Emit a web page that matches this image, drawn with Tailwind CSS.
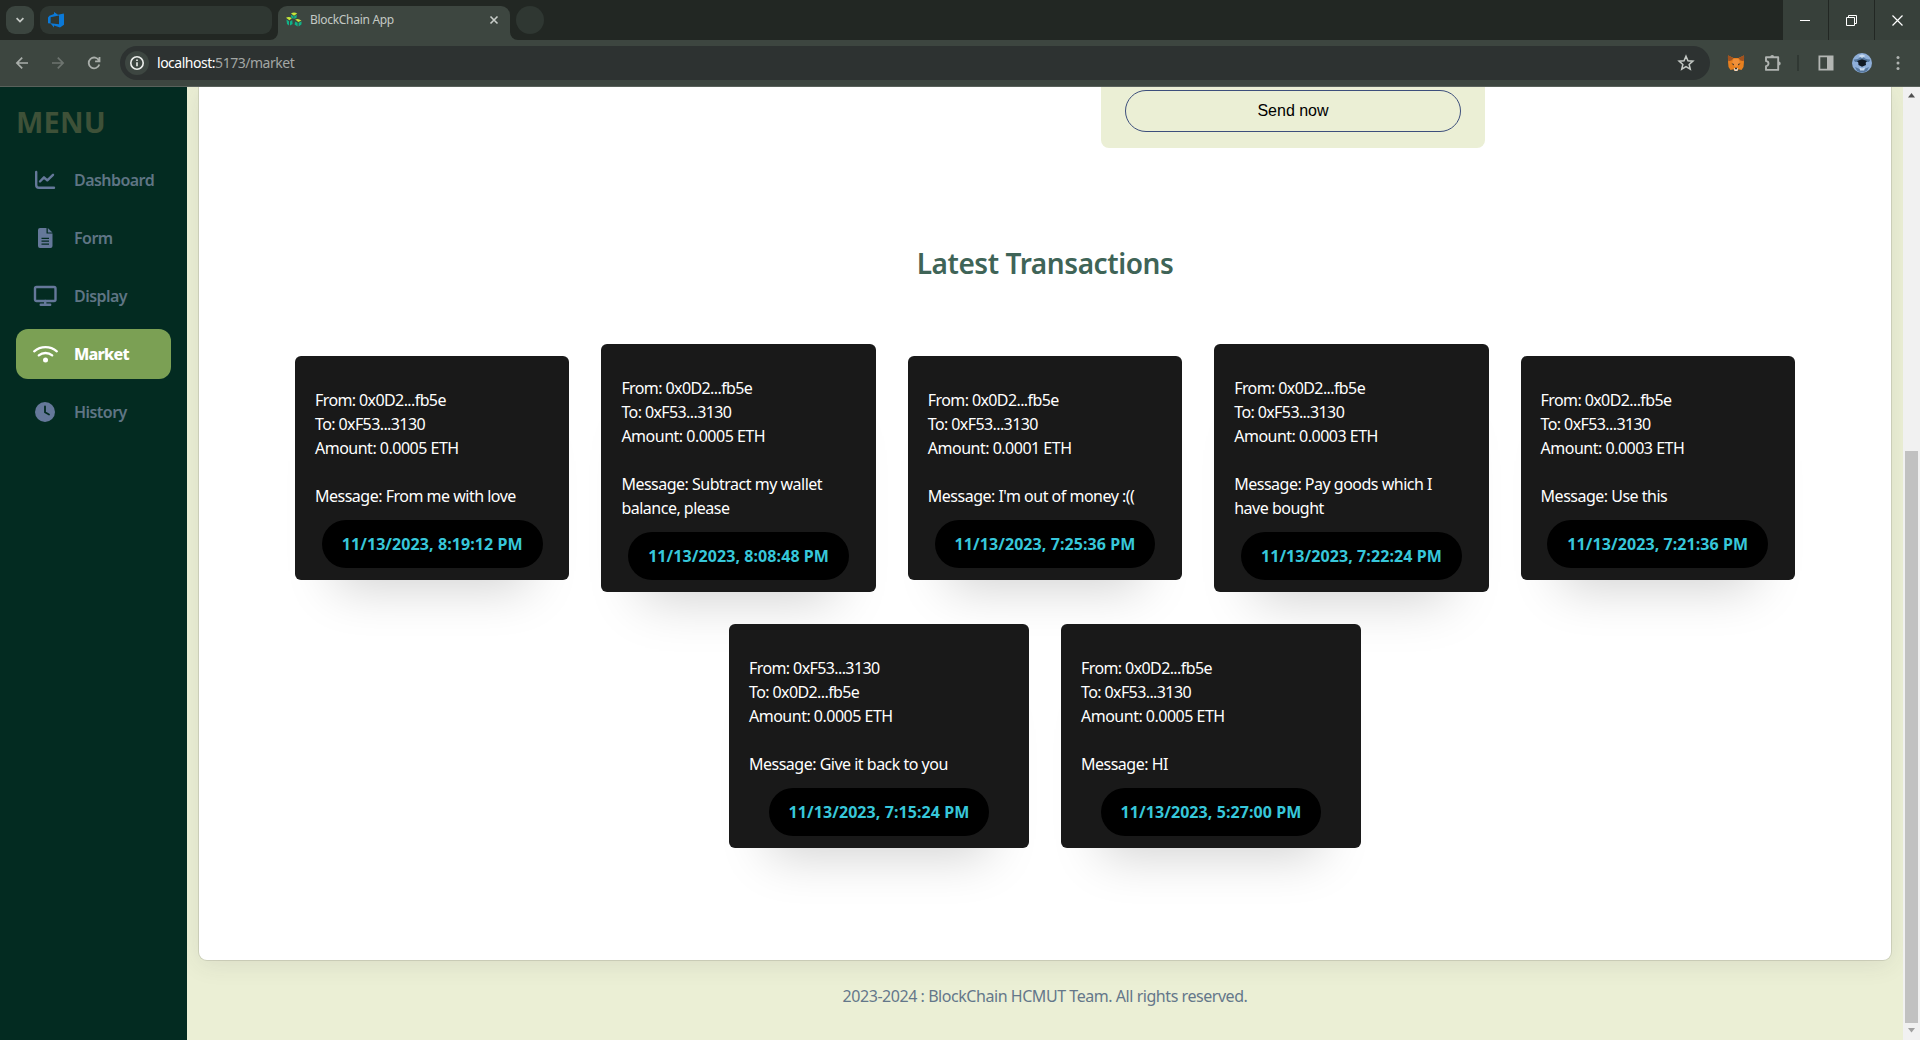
<!DOCTYPE html>
<html lang="en">
<head>
<meta charset="utf-8">
<title>BlockChain App</title>
<script src="https://cdn.jsdelivr.net/npm/@tailwindcss/browser@4"></script>
</head>
<body class="flex h-[1040px] w-[1920px] flex-col overflow-hidden bg-[#ebefd5] font-['Noto_Sans',sans-serif]">

<!-- Browser chrome -->
<header class="shrink-0">
  <div class="flex h-10 items-start bg-[#222723]">
    <div class="ml-1.5 mt-1.5 flex size-7 items-center justify-center rounded-[9px] bg-[#3b453f]">
      <svg class="size-4" viewBox="0 0 16 16" fill="none" stroke="#c5cac6" stroke-width="1.7"><path d="M4.6 6.2 8 9.6l3.4-3.4"/></svg>
    </div>
    <div class="ml-1.5 mt-1.5 flex h-7 w-[232px] items-center rounded-[9px] bg-[#2f3732] pl-2">
      <svg class="size-4" viewBox="0 0 16 16" fill="#0b79d8"><path fill-rule="evenodd" d="M0 5.6 1.4 3.8 6 2V0l4 2.8L15.8 1.6 16 3v9.8l-4 2.6-6-1.8v2L2.6 11.4 0 11.2Zm2.6-.4v6L11 12.3V3.6Z"/></svg>
    </div>
    <div class="relative ml-1.5 mt-1.5 flex h-[34px] w-[232px] items-center rounded-t-[9px] bg-[#3d4640] px-2 pb-1.5">
      <svg class="absolute bottom-0 -left-2 size-2" viewBox="0 0 8 8" fill="#3d4640"><path d="M8 0v8H0a8 8 0 0 0 8-8Z"/></svg>
      <svg class="absolute bottom-0 -right-2 size-2" viewBox="0 0 8 8" fill="#3d4640"><path d="M0 0v8h8a8 8 0 0 1-8-8Z"/></svg>
      <svg class="size-4" viewBox="0 0 16 16">
        <g fill="#10b489"><path d="M4.800 2.800 7.600 4.300V7L5.400 5.800Z"/><path d="M10.800 2.800 8.200 4.300V7l2.400-1.200Z"/><path d="m.4 7.600 2.600 1.600v4.200L1 12Z"/><path d="m6.200 8-2.200 1.400v4.200l2.600-1.600Z"/><path d="m9.200 9.400 2.400 1.400v3.600L8.600 12.400Z"/><path d="m15.600 9.600-3 1.200v3.600l2.800-1.800Z"/></g>
        <g fill="#c6e83b"><path d="M5 1.600Q8-.8 11.200 1.600L8 3.700Z"/><path d="M0 5.800Q3 4 5.800 6.200L3.400 8.300Z"/><path d="M9.200 7.400q3-1.400 6.200 1L12.400 10Z"/></g>
      </svg>
      <span class="ml-2 text-[12px] leading-4 tracking-[-0.3px] text-[#c3c9c4]">BlockChain App</span>
      <svg class="ml-auto size-4" viewBox="0 0 16 16" fill="none" stroke="#c8cdc9" stroke-width="1.600"><path d="m4.500 4.500 7 7m0-7-7 7"/></svg>
    </div>
    <div class="ml-1.5 mt-1.5 size-7 rounded-full bg-[#2f3732]"></div>
    <div class="ml-auto flex gap-px">
      <div class="flex h-10 w-[45px] items-center justify-center bg-[#37403a]"><svg class="size-[11px]" viewBox="0 0 11 11" stroke="#fff"><path d="M0 5.500h10"/></svg></div>
      <div class="flex h-10 w-[45px] items-center justify-center bg-[#37403a]"><svg class="size-[11px]" viewBox="0 0 11 11" fill="none" stroke="#fff"><path d="M.5 2.500h8v8h-8zM2.500 2.500v-2h8v8h-2"/></svg></div>
      <div class="flex h-10 w-[45px] items-center justify-center bg-[#37403a]"><svg class="size-[11px]" viewBox="0 0 11 11" stroke="#fff" stroke-width="1.200"><path d="m.5.5 10 10m0-10-10 10"/></svg></div>
    </div>
  </div>

  <div class="flex h-[47px] items-center border-b border-[#59615b] bg-[#3d4640]">
    <svg class="ml-3 size-5" viewBox="0 0 20 20" fill="none" stroke="#a9aeaa" stroke-width="1.700"><path d="M16 10H5m5.200-5.300L4.900 10l5.300 5.300"/></svg>
    <svg class="ml-4 size-5" viewBox="0 0 20 20" fill="none" stroke="#6d746f" stroke-width="1.700"><path d="M4 10h11M9.800 4.700l5.300 5.300-5.300 5.300"/></svg>
    <svg class="ml-4 size-5" viewBox="0 0 20 20" fill="none" stroke="#a9aeaa" stroke-width="1.800"><path d="M15 7.600A5.400 5.400 0 1 0 15.300 11.500M15.500 4v4.300h-4.400"/></svg>
    <div class="ml-4 flex h-[34px] w-[1590px] items-center rounded-full bg-[#2d3231] pl-[5px] pr-[15px]">
      <div class="flex size-6 items-center justify-center rounded-full bg-[#3d4641]">
        <svg class="size-4" viewBox="0 0 16 16" fill="none" stroke="#eceeec" stroke-width="1.600"><circle cx="8" cy="8" r="6.200"/><path d="M8 7.200v4M8 4.500v1.600"/></svg>
      </div>
      <span class="ml-2 text-[14px] leading-5 tracking-[-0.48px] text-[#a2a6a4]"><span class="text-white">localhost:</span>5173/market</span>
      <svg class="ml-auto size-[18px]" viewBox="0 0 18 18" fill="none" stroke="#c5cac6" stroke-width="1.500"><path d="m9 2.200 1.950 4.550 4.950.43-3.750 3.250 1.130 4.830L9 12.700l-4.280 2.560 1.130-4.830L2.100 7.180l4.950-.43Z"/></svg>
    </div>
    <svg class="ml-[17px] size-[18px]" viewBox="0 0 18 18">
      <path fill="#e8801f" d="M1 1.500 6.500 4h5L17 1.500v6L16.500 13 14.500 16l-3-.7L10.500 17h-3l-1-1.700-3 .7-2-3L1 7.500Z"/>
      <path fill="#a0521f" d="M1 1.200 6.600 4.200 4.500 6.500 1.300 7.300.8 3.500Zm16 0-5.600 3 2.100 2.300 3.200.8.500-3.800Z"/>
      <path fill="#f0903a" d="M6.500 5h5L13 9.500 9 13.500 5 9.500Z"/>
      <path fill="#30302e" d="m4.500 9.300 2.500.8-.5 1.400Zm9 0-2.500.8.500 1.400Z"/>
      <path fill="#e9ddd2" d="M6.800 14.300h4.400L10.300 17H7.700Z"/><path fill="#30302e" d="M8 13.800h2v1.400H8Z"/>
    </svg>
    <svg class="ml-[18px] size-5" viewBox="0 0 20 20" fill="none" stroke="#b0b4b1" stroke-width="1.900" stroke-linejoin="round"><path d="M3 4.300h12.200v12.600H3v-3.800a2.500 2.500 0 0 0 0-5Z"/><path fill="#b0b4b1" stroke="none" d="M7.200 4a2 2 0 1 1 4 0ZM15.700 8.600a2 2 0 1 1 0 4Z"/></svg>
    <div class="ml-[14px] h-4 w-0.5 bg-[#303833]"></div>
    <svg class="ml-[19px] size-4" viewBox="0 0 16 16"><path fill="none" stroke="#b3b6b3" stroke-width="1.800" d="M1.400 1.400h13.200v13.200H1.400z"/><path fill="#b3b6b3" d="M9 1h6v14H9z"/></svg>
    <svg class="ml-[18px] size-5" viewBox="0 0 20 20"><circle cx="10" cy="10" r="10" fill="#8fafd9"/><path fill="#56789f" d="M1.500 6.500Q6 7 10 3q4 4 8.500 3.500L17 9H3ZM3 14l7 3 7-3-2 4a10 10 0 0 1-10 0Z"/><path fill="#111923" d="m5 8 5-1.800L15 8l-1.300 1.800.3 2.200-4 1.800L6.500 12 6.300 9.500Z"/><path fill="#c7d9ee" d="m7.500 14.500 2.500 1 3-1-.8 3H8ZM6.500 3Q10 0 13.500 3L10 5Z"/></svg>
    <svg class="ml-[18px] h-4 w-4" viewBox="0 0 16 16" fill="#b0b4b1"><circle cx="8" cy="2.500" r="1.500"/><circle cx="8" cy="8" r="1.500"/><circle cx="8" cy="13.500" r="1.500"/></svg>
  </div>
</header>

<div class="flex min-h-0 flex-1">
  <!-- Sidebar -->
  <aside class="z-10 w-[187px] shrink-0 bg-[#032b21] px-4 pt-3">
    <h1 class="text-[29px] leading-[46px] font-bold tracking-[0.2px] text-[#3e5138]">MENU</h1>
    <nav class="mt-[10px] flex w-[155px] flex-col gap-2 text-base tracking-[-0.55px] font-semibold text-[#5f7584]">
      <a class="flex h-[50px] items-center pl-[17px]">
        <svg class="size-6" viewBox="0 0 24 24" fill="none" stroke="#65789a" stroke-width="2.400" stroke-linecap="round" stroke-linejoin="round"><path d="M3.200 4v13a2.800 2.800 0 0 0 2.800 2.800h15M7 13.500l4-4.200 3.300 3L20 6.800"/></svg>
        <span class="ml-[17px]">Dashboard</span></a>
      <a class="flex h-[50px] items-center pl-[17px]">
        <svg class="size-6" viewBox="0 0 24 24" fill="#65789a"><path fill-rule="evenodd" d="M7 2h6.500v5.500h6V20a2 2 0 0 1-2 2H7a2 2 0 0 1-2-2V4a2 2 0 0 1 2-2Zm1.500 9.700v1.200h7.500v-1.200Zm0 2.900v1.200h7.500v-1.200Zm0 2.900v1.200h7.500v-1.200ZM14.800 2l4.700 4.400h-4.700Z"/></svg>
        <span class="ml-[17px]">Form</span></a>
      <a class="flex h-[50px] items-center pl-[17px]">
        <svg class="size-6" viewBox="0 0 24 24" fill="none" stroke="#65789a" stroke-width="2.400" stroke-linecap="round" stroke-linejoin="round"><rect x="2" y="3" width="20.500" height="14" rx="1.500"/><path d="M12.200 17v3.500M7.700 20.800h9.500"/></svg>
        <span class="ml-[17px]">Display</span></a>
      <a class="flex h-[50px] items-center rounded-xl bg-[#7ba054] pl-[17px] font-extrabold tracking-[-0.75px] text-white">
        <svg class="size-6 overflow-visible" viewBox="0 0 24 24" fill="none" stroke="#fff" stroke-width="2.300" stroke-linecap="round"><path d="M1.200 9.300a17.500 17.500 0 0 1 22.600 0M5.800 13.400a10.500 10.500 0 0 1 13.400 0"/><circle cx="12.500" cy="18" r="2.500" fill="#fff" stroke="none"/></svg>
        <span class="ml-[17px]">Market</span></a>
      <a class="flex h-[50px] items-center pl-[17px]">
        <svg class="size-6" viewBox="0 0 24 24"><circle cx="12" cy="12" r="10" fill="#65789a"/><path fill="none" stroke="#032b21" stroke-width="1.800" stroke-linecap="round" d="M12 6.500v5.700l4 2.300"/></svg>
        <span class="ml-[17px]">History</span></a>
    </nav>
  </aside>

  <!-- Page content -->
  <div class="flex min-w-0 flex-1 flex-col items-center overflow-hidden">
    <main class="flex h-[873px] w-[1692px] shrink-0 flex-col items-center rounded-b-lg bg-white shadow-[0_0_0_1px_rgba(0,0,0,0.1),0_4px_24px_rgba(60,60,60,0.1)]">
      <div class="ml-[496px] h-[61px] w-[384px] rounded-b-lg bg-[#ebefd5] px-6 pt-[3px]">
        <button class="h-[42px] w-full rounded-full border border-[#3d4f7c] font-['Liberation_Sans',sans-serif] text-base text-black">Send now</button>
      </div>
      <h2 class="mt-[95px] text-[28px] leading-10 font-semibold tracking-[-0.42px] text-[#3f6457]">Latest Transactions</h2>
      <section id="transactions" class="mt-[61px] flex w-[1500px] flex-wrap items-center justify-center gap-8"></section>
    </main>
    <footer class="mt-6 text-base tracking-[-0.45px] text-[#64778a]">2023-2024 : BlockChain HCMUT Team. All rights reserved.</footer>
  </div>

  <!-- Scrollbar -->
  <div class="flex w-[17px] shrink-0 flex-col items-center bg-[#f1f1f1]">
    <svg class="my-1.5 h-[5px] w-[7px]" viewBox="0 0 7 5" fill="#505050"><path d="M3.500 0 7 4.500H0Z"/></svg>
    <div class="mt-[347px] h-[572px] w-[13px] bg-[#c1c1c1]"></div>
    <svg class="mt-[5px] h-[5px] w-[7px]" viewBox="0 0 7 5" fill="#a0a0a0"><path d="M3.500 4.500 7 0H0Z"/></svg>
  </div>
</div>

<script>
const a = '0x0D2...fb5e', b = '0xF53...3130';
const transactions = [
  [a, b, '0.0005', 'From me with love', '11/13/2023, 8:19:12 PM'],
  [a, b, '0.0005', 'Subtract my wallet balance, please', '11/13/2023, 8:08:48 PM'],
  [a, b, '0.0001', "I'm out of money :((", '11/13/2023, 7:25:36 PM'],
  [a, b, '0.0003', 'Pay goods which I have bought', '11/13/2023, 7:22:24 PM'],
  [a, b, '0.0003', 'Use this', '11/13/2023, 7:21:36 PM'],
  [b, a, '0.0005', 'Give it back to you', '11/13/2023, 7:15:24 PM'],
  [a, b, '0.0005', 'HI', '11/13/2023, 5:27:00 PM'],
];
document.getElementById('transactions').innerHTML = transactions.map(([from, to, amount, message, time]) => `
  <article class="flex min-w-[270px] max-w-[300px] flex-1 flex-col rounded-md bg-[#191919] px-5 pt-8 pb-3 text-base leading-6 tracking-[-0.5px] text-white shadow-[0_48px_50px_-40px_rgba(0,0,0,0.18)]">
    <p class="tracking-[-0.6px]">From: ${from}</p>
    <p class="tracking-[-0.6px]">To: ${to}</p>
    <p>Amount: ${amount} ETH</p>
    <p class="mt-6">Message: ${message}</p>
    <div class="mt-3 self-center rounded-3xl bg-black px-5 py-3 font-bold tracking-[0.08px] whitespace-nowrap text-[#37c7da]">${time}</div>
  </article>`).join('');
</script>
</body>
</html>
